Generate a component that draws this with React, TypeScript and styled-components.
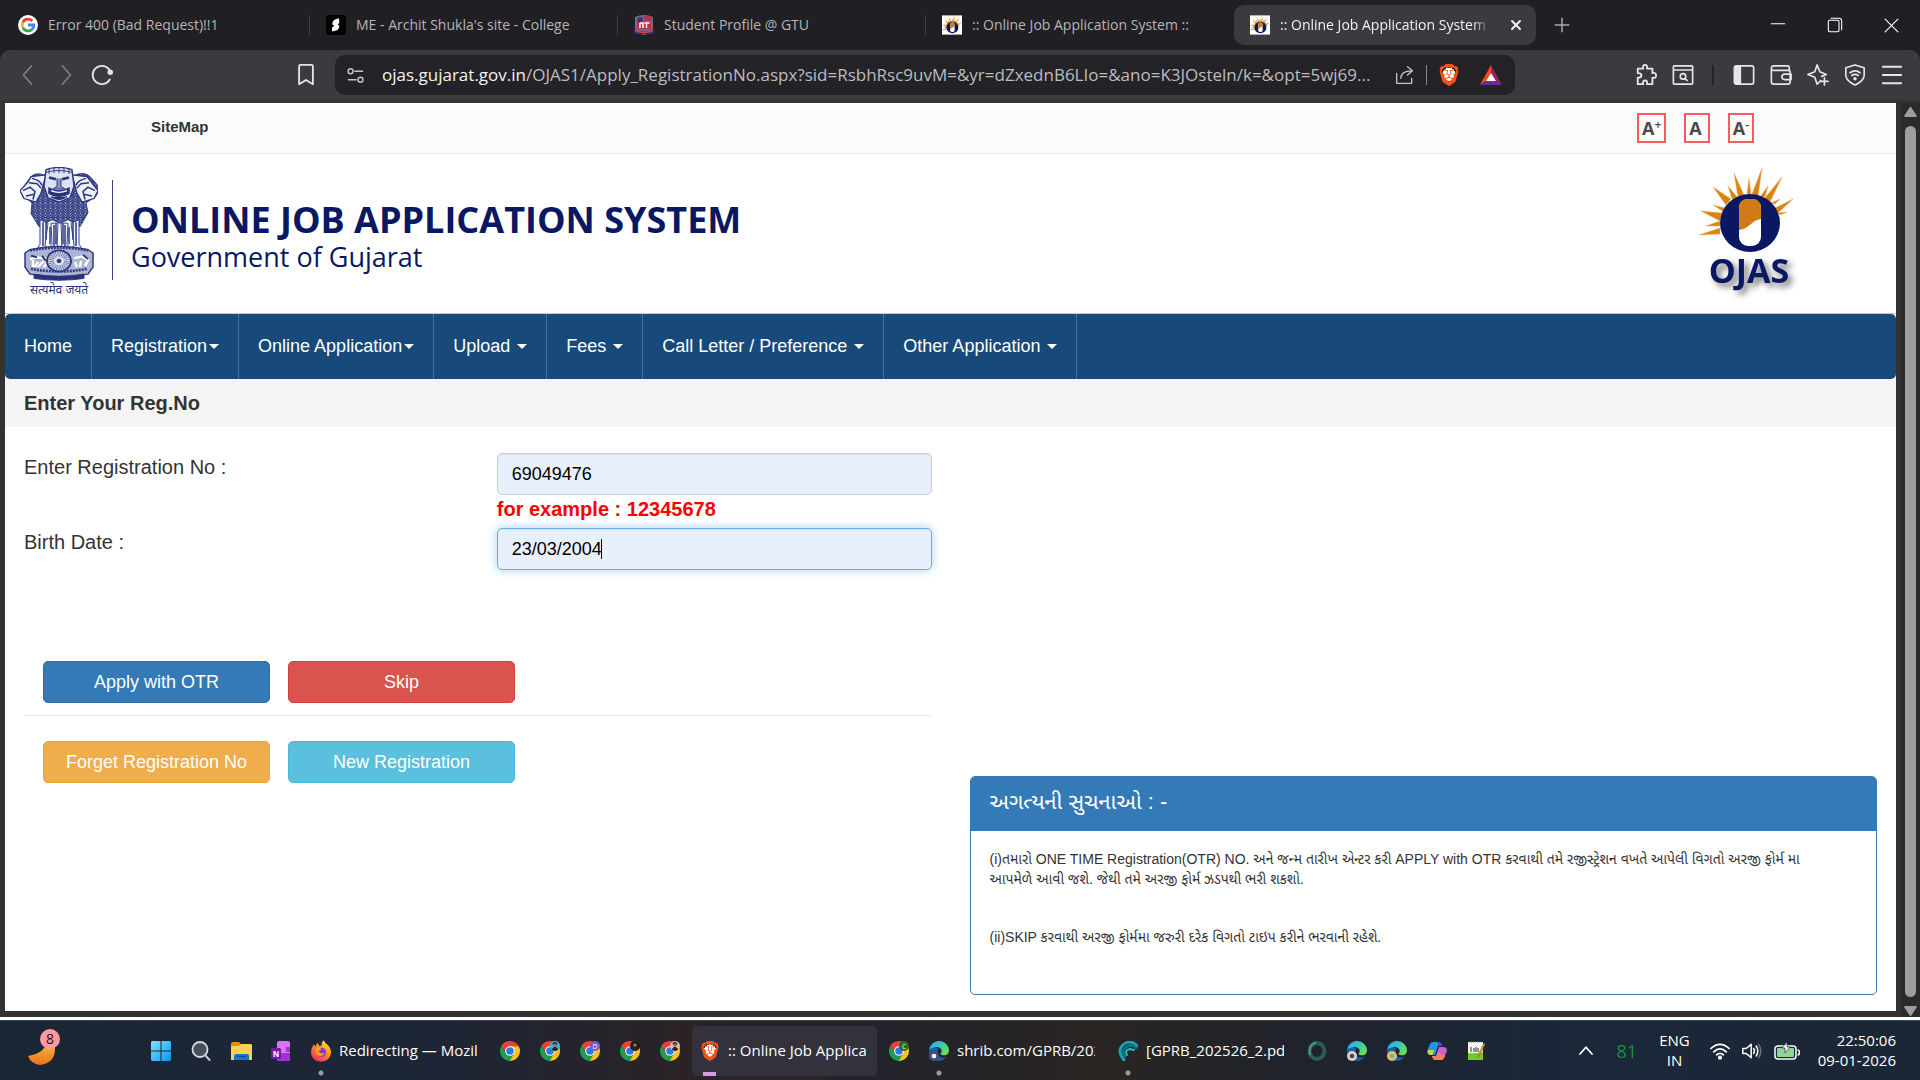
import React, { useEffect, useRef } from "react";
import styled, { createGlobalStyle, css } from "styled-components";
import { SiBrave } from "react-icons/si";

const ui = `"Open Sans", "Noto Sans", sans-serif`;
const site = `"Liberation Sans", "Noto Sans Gujarati", "Noto Sans", sans-serif`;

const GlobalStyle = createGlobalStyle`
  * { box-sizing: border-box; }
  body { margin: 0; background: #333333; overflow: hidden; }
  button { border: 0; background: none; padding: 0; color: inherit; font: inherit; cursor: pointer; }
  svg { display: block; flex: none; }
`;

const Screen = styled.div`
  display: flex;
  flex-direction: column;
  height: 100vh;
  font-family: ${ui};
`;

/* ---------- browser chrome ---------- */

const TabStrip = styled.div`
  display: flex;
  align-items: center;
  height: 50px;
  padding-left: 2px;
  background: #201f23;
  color: #b6b5b9;
  font-size: 14px;
`;

const Tab = styled.div<{ $active?: boolean; $divided?: boolean }>`
  display: flex;
  align-items: center;
  gap: 10px;
  flex: 0 1 308px;
  height: 40px;
  padding: 0 12px 0 16px;
  border-radius: 10px;
  min-width: 0;
  ${(p) =>
    p.$divided &&
    css`
      background: linear-gradient(#3f3e42, #3f3e42) right center / 1px 20px no-repeat;
      border-radius: 0;
    `}
  ${(p) =>
    p.$active &&
    css`
      flex-basis: 302px;
      background: #3b3a3f;
      color: #f2f2f4;
    `}
`;

const TabTitle = styled.span<{ $fade?: boolean }>`
  flex: 1;
  padding-bottom: 2px;
  overflow: hidden;
  white-space: nowrap;
  ${(p) => p.$fade && css`mask-image: linear-gradient(to right, #000 88%, transparent 97%);`}
`;

const StripButton = styled.button`
  display: grid;
  place-items: center;
  width: 52px;
  height: 40px;
  color: #a9a8ac;
`;

const WindowControls = styled.div`
  display: flex;
  margin-left: auto;
  color: #ffffff;
`;

const WindowButton = styled.button`
  display: grid;
  place-items: center;
  width: 57px;
  height: 48px;
`;

const Toolbar = styled.div`
  display: flex;
  align-items: center;
  height: 50px;
  padding: 0 10px 0 9px;
  background: #3b3a3f;
  border-radius: 10px 10px 0 0;
  color: #e6e6e8;
`;

const ToolbarBack = styled.div`
  background: #201f23;
`;

const ToolButton = styled.button<{ $dim?: boolean }>`
  display: grid;
  place-items: center;
  width: 37px;
  height: 40px;
  color: ${(p) => (p.$dim ? "#848388" : "inherit")};
`;

const BookmarkButton = styled(ToolButton)`
  margin-left: 167px;
`;

const AddressBar = styled.div`
  display: flex;
  align-items: center;
  flex: 0 1 1180px;
  min-width: 0;
  height: 40px;
  margin-left: 11px;
  padding: 0 6px 0 12px;
  border-radius: 10px;
  background: #232226;
  color: #c4c3c8;
`;

const Url = styled.a`
  flex: 1;
  min-width: 0;
  margin-left: 18px;
  padding-bottom: 2px;
  overflow: hidden;
  white-space: nowrap;
  color: #bdbcc1;
  font-size: 17px;
  text-decoration: none;

  b { font-weight: 400; color: #f4f4f6; }
`;

const Divider = styled.span<{ $dark?: boolean }>`
  width: ${(p) => (p.$dark ? 2 : 1)}px;
  height: 20px;
  margin: 0 ${(p) => (p.$dark ? 11 : 3)}px;
  background: ${(p) => (p.$dark ? "#232226" : "#87868b")};
`;

const AddressActions = styled.div`
  display: flex;
  align-items: center;

  button:last-child { margin-left: 5px; }
`;

const Extensions = styled.div`
  display: flex;
  align-items: center;
  margin-left: auto;
`;

/* ---------- page frame ---------- */

const Viewport = styled.div`
  display: flex;
  flex: 1;
  min-height: 0;
  padding: 3px 0 0 5px;
  background: #333333;
  border-bottom: 3px solid #ffffff;
`;

const Page = styled.div`
  display: flex;
  flex-direction: column;
  flex: 1;
  margin: 0 5px 6px 0;
  background: #ffffff;
  color: #333333;
  font-family: ${site};
`;

const Scrollbar = styled.div`
  display: flex;
  flex-direction: column;
  align-items: center;
  gap: 9px;
  width: 19px;
  padding: 4px 0 1px;
  background: #2b2b2b;
`;

const ScrollThumb = styled.div`
  flex: 1;
  width: 11px;
  border-radius: 6px;
  background: #9e9e9e;
`;

const TopBar = styled.div`
  display: flex;
  align-items: center;
  justify-content: space-between;
  height: 51px;
  padding: 0 142px 0 146px;
  background: #fbfbfb;
  border-bottom: 1px solid #e7e7e7;
`;

const SiteMap = styled.a`
  padding-bottom: 4px;
  color: #333333;
  font-size: 15px;
  font-weight: 700;
  text-decoration: none;
`;

const TextSizes = styled.div`
  display: flex;
  gap: 18px;
  padding-bottom: 1px;
`;

const SizeButton = styled.button`
  height: 30px;
  padding: 0 3px;
  border: 2px solid #f75b5b;
  color: #4a4a4a;
  font: 700 18px/26px ${ui};

  &:nth-child(2) { padding-right: 6px; }

  sup { font-size: 12px; font-weight: 600; line-height: 0; vertical-align: 6px; }
`;

const Banner = styled.header`
  display: flex;
  align-items: center;
  height: 160px;
  padding: 0 94px 0 15px;
  border-bottom: 1px solid #c5cbd0;
`;

const BannerRule = styled.div`
  width: 1px;
  height: 100px;
  margin: 0 18px 8px 14px;
  background: #3c477d;
`;

const BannerText = styled.div`
  flex: 1;
  padding-top: 4px;
  color: #0a1763;
  font-family: ${ui};
  white-space: nowrap;
`;

const BannerTitle = styled.h1`
  margin: 0;
  font-size: 36px;
  font-weight: 700;
  line-height: 42px;
`;

const BannerSub = styled.p`
  margin: 0;
  font-size: 27px;
  line-height: 32px;
`;

const Nav = styled.nav`
  display: flex;
  height: 65px;
  background: #174a7a;
  border-radius: 5px;
`;

const NavItem = styled.button<{ $tight?: boolean }>`
  display: flex;
  align-items: center;
  gap: ${(p) => (p.$tight ? 2 : 7)}px;
  padding: 0 19px;
  border-right: 1px solid #45719b;
  color: #ffffff;
  font-size: 18px;
`;

const Caret = styled.i`
  border: 5px solid transparent;
  border-top-color: #ffffff;
  border-bottom-width: 0;
`;

const TitleBand = styled.h2`
  margin: 0;
  padding: 0 19px;
  background: #f4f4f4;
  font-size: 20px;
  line-height: 48px;
`;

const Main = styled.main`
  display: grid;
  grid-template-columns: 1fr 1fr;
  flex: 1;
`;

const Column = styled.section`
  padding: 26px 19px 16px;
`;

const NoticeColumn = styled(Column)`
  align-self: end;
`;

const Field = styled.div`
  display: grid;
  grid-template-columns: 1fr 1fr;
  column-gap: 38px;
  margin-bottom: 5px;
`;

const FieldLabel = styled.label`
  font-size: 20px;
  line-height: 28px;
`;

const TextBox = styled.input<{ $current?: boolean }>`
  display: block;
  width: 100%;
  height: 42px;
  padding: 0 14px;
  border: 1px solid ${(p) => (p.$current ? "#66afe9" : "#cccccc")};
  border-radius: 5px;
  outline: 0;
  background: #e8f0fe;
  box-shadow: inset 0 1px 1px rgba(0, 0, 0, 0.08)
    ${(p) => (p.$current ? ", 0 0 10px rgba(102, 175, 233, 0.6)" : "")};
  color: #000000;
  font: 18px ${site};
  ${(p) =>
    p.$current &&
    css`
      caret-color: transparent;
      background: linear-gradient(#000000, #000000) 103px center / 1px 20px no-repeat #e8f0fe;
    `}
`;

const Hint = styled.p`
  margin: 0;
  color: #ff0000;
  font-size: 20px;
  font-weight: 700;
  line-height: 28px;
`;

const Actions = styled.div`
  display: flex;
  gap: 18px;
  padding: 0 19px;
`;

const FirstActions = styled(Actions)`
  margin-top: 91px;
`;

const Rule = styled.hr`
  margin: 12px 0 25px;
  border: 0;
  border-top: 1px solid #eeeeee;
`;

const tones = {
  primary: ["#337ab7", "#2e6da4"],
  danger: ["#d9534f", "#d43f3a"],
  warning: ["#f0ad4e", "#eea236"],
  info: ["#5bc0de", "#46b8da"],
};

const ActionButton = styled.button<{ $tone: keyof typeof tones }>`
  width: 227px;
  height: 42px;
  border: 1px solid ${(p) => tones[p.$tone][1]};
  border-radius: 5px;
  background: ${(p) => tones[p.$tone][0]};
  color: #ffffff;
  font-size: 18px;
`;

const Panel = styled.article`
  border: 1px solid #337ab7;
  border-radius: 5px;
  overflow: hidden;
`;

const PanelHead = styled.h3`
  margin: 0;
  padding: 0 19px 4px;
  background: #337ab7;
  color: #ffffff;
  font-size: 22px;
  font-weight: 400;
  line-height: 50px;
`;

const PanelBody = styled.div`
  padding: 18px 19px 47px;
  font-size: 14px;
  line-height: 20px;

  p { margin: 0 0 38px; }
  p:last-child { margin: 0; }
`;

/* ---------- task bar ---------- */

const TaskBar = styled.footer`
  display: flex;
  align-items: center;
  height: 60px;
  padding: 0 24px 0 21px;
  border-top: 1px solid #3b444e;
  background: linear-gradient(90deg, #1b2635 0%, #1d2636 22%, #2b2326 36%, #23232b 46%, #2a2523 57%, #1e232d 70%, #1b283a 82%, #1c2735 100%);
  color: #ffffff;
  font-size: 15px;
`;

const Weather = styled.button`
  margin-right: 78px;
`;

const Task = styled.button<{ $wide?: boolean; $mark?: "dot" | "current" }>`
  display: flex;
  align-items: center;
  gap: 8px;
  flex: 0 1 ${(p) => (p.$wide ? 185 : 36)}px;
  min-width: 36px;
  height: 50px;
  margin: 0 2px;
  padding: 0 ${(p) => (p.$wide ? 11 : 8)}px 0 8px;
  border-radius: 5px;
  overflow: hidden;
  white-space: nowrap;
  background: ${(p) => {
    if (p.$mark === "dot") return "radial-gradient(circle at 18px 47px, #9a9ba0 2px, transparent 3px)";
    if (p.$mark === "current") return "linear-gradient(#d69be0, #d69be0) 11px 46px / 13px 4px no-repeat, #33313c";
    return "none";
  }};
`;

const TaskLabel = styled.span`
  flex: 1;
  padding-bottom: 2px;
  overflow: hidden;
  text-align: left;
`;

const Tray = styled.div`
  display: flex;
  align-items: center;
  gap: 12px;
  margin-left: auto;
`;

const Temp = styled.span`
  margin: 0 10px;
  color: #178f45;
  font-size: 18px;
`;

const Stacked = styled.span<{ $end?: boolean }>`
  margin: ${(p) => (p.$end ? "0 0 0 6px" : "0 8px 0 0")};
  text-align: ${(p) => (p.$end ? "right" : "center")};
  font-size: 15px;
  line-height: 20px;
  padding-bottom: 2px;
`;

/* ---------- drawings ---------- */

const BraveMark = styled(SiBrave)`
  color: #fb5018;
  background: radial-gradient(circle at 50% 48%, #ffffff 42%, transparent 43%);
`;

const Line: React.FC<{ size?: number; w?: number; children: React.ReactNode }> = ({ size = 22, w = 1.6, children }) => (
  <svg width={size} height={size} viewBox="0 0 24 24" fill="none" stroke="currentColor" strokeWidth={w} strokeLinecap="round" strokeLinejoin="round">
    {children}
  </svg>
);

const Google = () => (
  <svg width="20" height="20" viewBox="0 0 24 24">
    <circle cx="12" cy="12" r="12" fill="#fff" />
    <g fill="none" strokeWidth="3.4">
      <path d="M17.1 7.2A7 7 0 0 0 5.7 9" stroke="#ea4335" />
      <path d="M5.7 9a7 7 0 0 0 0 6" stroke="#fbbc05" />
      <path d="M5.7 15a7 7 0 0 0 10.8 2.5" stroke="#34a853" />
      <path d="M12 12h7a7 7 0 0 1-2.5 5.5" stroke="#4285f4" />
    </g>
  </svg>
);

const SiteS = () => (
  <svg width="20" height="20" viewBox="0 0 20 20">
    <rect width="20" height="20" rx="3" fill="#000" />
    <path d="M13 3.2 9 4.4Q6 6 6.4 9.600l2 1.200-2.400 1.600v4l4.200-.8Q13.600 14 13.200 10.400l-1.600-1 1.800-1.600Z" fill="#fff" />
  </svg>
);

const Crest = () => (
  <svg width="20" height="20" viewBox="0 0 20 20">
    <path d="M1 2Q10-2 19 2v12q-3 5-9 6-6-1-9-6Z" fill="#6e6f88" />
    <circle cx="6" cy="5" r="3" fill="#3c3a62" />
    <path d="M3 7h14v7H3Z" fill="#c92a43" />
    <path d="M10 1h8v5h-8Z" fill="#a83a50" />
    <path d="M6 8v5M6 8h3v5M12.500 8v5M10.500 8h5" stroke="#fff" strokeWidth="1.500" fill="none" />
    <path d="M0 14q10 5 20 0v5H0Z" fill="#2d2a80" />
    <path d="M1 15.500q9 4 18 0" stroke="#e0442e" strokeWidth="1.500" fill="none" />
  </svg>
);

const rays =
  "M1 80 22 73V79ZM8 71 22 66V71ZM3 56 24 58 22 66ZM15 50 27 53 26 57ZM15 32 33 44 28 50ZM30 31 40 43 34 44ZM36 18 46 40 40 42ZM51 23 53 39H49ZM64 13 60 42 54 39ZM70 31 67 42 62 42ZM84 22 72 47 66 44ZM82 44 77 49 73 48ZM95 44 80 58 77 53ZM89 57 82 60 80 58Z";

const OjasSun: React.FC<{ small?: boolean }> = ({ small }) => (
  <>
    <path d={rays} fill="#d98316" stroke="#f0b050" strokeWidth={small ? 2 : 0.5} />
    <ellipse cx="52" cy="68" rx="30" ry="29" fill="#0a1763" />
    <rect x="41" y="44" width="22" height="47" rx="9" fill="#fff" />
    <path d="M41 75V53q0-9 9-9h4q9 0 9 9v11c-10 1-11 10-22 11Z" fill="#d07a18" />
  </>
);

const OjasFavicon = () => (
  <svg width="20" height="20" viewBox="0 8 100 96">
    <rect y="8" width="100" height="96" fill="#fff" />
    <OjasSun small />
  </svg>
);

const OjasShadowed = styled.text`
  font: 700 34px ${ui};
  fill: #0a1763;
  filter: drop-shadow(4px 4px 3px #777777);
`;

const OjasLogo = () => (
  <svg width="104" height="136" viewBox="0 11 104 136">
    <OjasSun />
    <OjasShadowed x="51" y="128" textAnchor="middle">OJAS</OjasShadowed>
  </svg>
);

const Emblem = () => (
  <svg viewBox="2 2 78 131" preserveAspectRatio="none" fill="none" stroke="#2c3780" strokeWidth="1">
    <defs>
      <pattern id="mane" width="5" height="6" patternUnits="userSpaceOnUse">
        <rect width="5" height="6" fill="#c9cde2" />
        <path d="M0 0 2.500 3.500 5 0M0 3 2.500 6.500 5 3" stroke="#28337c" strokeWidth="1.300" fill="none" />
      </pattern>
    </defs>
    <path d="M28 12Q16 6 11 16L3 29l6 9 5 5-1 12 8 15 13-8 8 4 8-4 12 8 8-16-2-11 10-8 4-9-9-12Q67 6 55 12Z" fill="url(#mane)" />
    <path d="M28 11 13 13 10 19 2 29 6 38 18 42 23 32ZM54 11 69 13 73 19 80 29 76 38 64 42 59 32Z" fill="#eef0f8" strokeWidth="1.400" />
    <path d="M5 29l7-4 5 5-2 9M11 20l8 1 4 5M8 35l8-2M77 29l-7-4-5 5 2 9M71 20l-8 1-4 5M74 35l-8-2M14 15q8 2 10 8M68 15q-8 2-10 8" strokeWidth="1.600" />
    <path d="M28 5Q41 0 54 5l2 19-4 13-11 5-11-5-4-13Z" fill="#dfe2f0" strokeWidth="1.400" />
    <path d="M28 8q13-4 26 0M31 3v7M36 2v7M41 1v8M46 2v7M51 3v7" />
    <path d="m31 14 7 2M51 14l-7 2" strokeWidth="3" />
    <path d="M39 15v9l-4 3h12l-4-3v-9" fill="#8b93bd" />
    <path d="M31 26q10 6 20 0v6q-10 7-20 0ZM33 36q8 6 16 0" fill="#28337c" strokeWidth="1.500" />
    <path d="M33 29q8 4 16 0" stroke="#fff" strokeWidth="1.500" />
    <path d="M22 62v28l-4 7h12l-3-6 3-25ZM33 66l1 24-5 7h10l1-31ZM43 66l1 31h10l-5-7 1-24ZM53 66l3 25-3 6h12l-4-7V62Z" fill="#f4f5fb" />
    <path d="M25 65v27M36 68v24M47 68v24M58 65v27M28 65v20M55 65v20M32 70v20M51 70v20M38 66v24M45 66v24" strokeWidth="1.500" />
    <path d="M12 96Q41 89 70 96l5 4v16l-5 8q-29 6-58 0l-5-8v-16Z" fill="#aeb5d3" strokeWidth="1.500" />
    <path d="M12 97q29-6 58 0M13 118q28 6 56 0" strokeWidth="3" strokeDasharray="2 1" />
    <path d="m12 107 7-2 8 1 2 5-3 5M15 108v8M20 110l-3 6M26 109l-6 7M56 106l8-2 6 4-3 7M57 110l2 6M63 109l-1 7" stroke="#fff" strokeWidth="2.500" />
    <path d="m13 103 6 2M65 102l5 5M24 103l4 6" stroke="#28337c" strokeWidth="2" />
    <circle cx="41" cy="109" r="12" fill="#dfe2f0" strokeWidth="2" />
    <circle cx="41" cy="109" r="8" strokeWidth="6" stroke="#6d77ab" strokeDasharray="1 1" />
    <circle cx="41" cy="109" r="2" fill="#28337c" />
    <path d="M16 124q25 5 50 0v5q-25 4-50 0Z" fill="#28337c" />
  </svg>
);

const EmblemBox = styled.figure`
  width: 78px;
  margin: 0;
  color: #28337c;
  text-align: center;
  font: 12px/18px "Noto Sans Devanagari", "Noto Sans", sans-serif;
  white-space: nowrap;

  svg { width: 78px; height: 115px; }
`;

const Chrome: React.FC<{ badge?: string; letter?: string }> = ({ badge, letter }) => (
  <svg width="20" height="20" viewBox="0 0 24 24">
    <path d="M12 6.400H22.600A12 12 0 0 0 1.700 5.800L7.100 14.800Z" fill="#ea4335" />
    <path d="M1.700 5.800A12 12 0 0 0 11.600 24L16.900 14.800 12 17.600 7.100 14.800Z" fill="#1e9d4c" />
    <path d="M22.600 6.400A12 12 0 0 1 11.600 24L16.900 14.800 12 6.400Z" fill="#fcc31e" />
    <circle cx="12" cy="12" r="5.800" fill="#fff" />
    <circle cx="12" cy="12" r="4.500" fill="#2c7be5" />
    {badge && <circle cx="18" cy="6" r="6" fill={badge} />}
    {letter && <text x="18" y="9" fontSize="8" fill="#fff" textAnchor="middle" fontFamily="Open Sans">{letter}</text>}
    {badge && !letter && (
      <>
        <circle cx="18" cy="4.500" r="2.400" fill="#a5715a" />
        <path d="M14 10q4-6 8 0-4 4-8 0Z" fill="#29242b" />
        <path d="M15.500 4q2-4 5 0" stroke="#19151a" strokeWidth="1.500" fill="none" />
      </>
    )}
  </svg>
);

const Edge: React.FC<{ badge: string; inner: string }> = ({ badge, inner }) => (
  <svg width="20" height="20" viewBox="0 0 24 24">
    <defs>
      <linearGradient id="edgeTop" x1="0" y1="0" x2="1" y2="0.600">
        <stop offset="0" stopColor="#2aa9e0" />
        <stop offset="0.500" stopColor="#2fc4c8" />
        <stop offset="1" stopColor="#6de04f" />
      </linearGradient>
    </defs>
    <path d="M.2 10A12 12 0 0 0 12 24q5 0 9-5-6 2-9-1-3-4-1-9Q4 5 .2 10Z" fill="#1462ad" />
    <path d="M.2 10A12 12 0 0 1 24 11c0 5-4 6.500-7 6-3 0-4-1.400-2.500-3C17 10 12 6 7 7.500Q2 8.500.2 10Z" fill="url(#edgeTop)" />
    <circle cx="6" cy="18" r="6" fill={badge} />
    <circle cx="6" cy="18" r="2.800" fill={inner} />
  </svg>
);

const Firefox = () => (
  <svg width="20" height="22" viewBox="0 0 24 26">
    <defs>
      <linearGradient id="fox" x1="0.800" y1="0" x2="0.200" y2="1">
        <stop offset="0" stopColor="#fff14a" />
        <stop offset="0.450" stopColor="#ff8b1f" />
        <stop offset="1" stopColor="#f5236b" />
      </linearGradient>
    </defs>
    <path d="M15 0q2 3 4 5 5 4 5 10A12 11 0 0 1 0 15Q0 9 4 5l1 3 3-5 2 4 3-1Q12 3 15 0Z" fill="url(#fox)" />
    <circle cx="12.500" cy="14.500" r="5.500" fill="#7a3fd0" />
    <path d="M6 10q4-2 7 1l-4 2q2 4 7 2-2 6-8 3-4-3-2-8Z" fill="#ff9a26" />
  </svg>
);

const Windows = () => (
  <svg width="20" height="20" viewBox="0 0 20 20">
    <defs>
      <linearGradient id="win" x1="0" y1="0" x2="1" y2="1">
        <stop offset="0" stopColor="#7be7ff" />
        <stop offset="1" stopColor="#0c94ee" />
      </linearGradient>
    </defs>
    <path d="M0 1 1 0h8.500v9.500H0ZM10.500 0H19l1 1v8.500h-9.500ZM0 10.500h9.500V20H1l-1-1ZM10.500 10.500H20V19l-1 1h-8.500Z" fill="url(#win)" />
  </svg>
);

const Folder = () => (
  <svg width="21" height="20" viewBox="0 0 21 20">
    <path d="M0 2 1.500 1H8l2 2v4H0Z" fill="#d9930b" />
    <path d="M0 5h8l2-2h10l1 1v15H0Z" fill="#ffd052" />
    <path d="M3 19v-4q0-2 2-2h11q2 0 2 2v4Z" fill="#1277c9" />
    <path d="M6 15.500h9" stroke="#084d8c" />
  </svg>
);

const OneNote = () => (
  <svg width="20" height="20" viewBox="0 0 20 20">
    <rect x="6" width="13" height="20" rx="2" fill="#d873f5" />
    <path d="M15 6h4v5h-4Z" fill="#9d35c5" /><path d="M7 12h12v6q0 2-2 2H7Z" fill="#a331cf" />
    <rect y="7" width="10" height="11" rx="1.500" fill="#7719a8" />
    <text x="5" y="15.500" fill="#fff" fontSize="8" fontWeight="700" textAnchor="middle" fontFamily="Open Sans">N</text>
  </svg>
);

const Search = () => (
  <svg width="20" height="20" viewBox="0 0 20 20" fill="none">
    <circle cx="9" cy="8.500" r="7.500" fill="#46515e" stroke="#d8dade" strokeWidth="1.800" />
    <path d="m14 14 4.500 5" stroke="#c4c7cc" strokeWidth="2" strokeLinecap="round" />
  </svg>
);

const TealFan = () => (
  <svg width="20" height="20" viewBox="0 0 20 20" fill="none" strokeLinecap="round">
    <path d="M6 19Q-3 8 8 2q6-3 11 3" stroke="#16a3b3" strokeWidth="3" />
    <path d="M7 16Q2 9 10 5q5-2 8 2" stroke="#0d7786" strokeWidth="2.500" />
    <path d="M9 14Q6 9 12 8l4 1" stroke="#1dc0cc" strokeWidth="2" />
  </svg>
);

const Ring = () => (
  <svg width="20" height="20" viewBox="0 0 20 20" fill="none">
    <ellipse cx="10" cy="10" rx="7.500" ry="8" stroke="#2c5c57" strokeWidth="4" />
    <path d="M9 1.500Q1 4 3 14" stroke="#4d9482" strokeWidth="2" />
  </svg>
);

const Copilot = () => (
  <svg width="20" height="20" viewBox="0 0 20 20">
    <path d="M6 1h6q2 0 3 4h-4L8 14H4q-5 0-3.500-5L3 3q1-2 3-2Z" fill="#2593e8" />
    <path d="M1 9h6l-1.500 5H4Q0 14 1 9Z" fill="#c9d53d" />
    <path d="M14 19H8q-2 0-3-4h4l3-9h4q5 0 3.500 5L17 17q-1 2-3 2Z" fill="#c95fd0" />
    <path d="M14 19H8q-2 0-3-4h4l2-4 7 4-1 2q-1 2-3 2Z" fill="#fb7a62" />
    <path d="M11 1h1q2 0 3 4h-4Z" fill="#5445ca" />
  </svg>
);

const NotePad = () => (
  <svg width="20" height="20" viewBox="0 0 20 20">
    <path d="M1 1h15v18H1Z" fill="#f5f7ec" /><path d="M1 12q8 1 15-1v8H1Z" fill="#6ecb28" />
    <path d="M2 1h14" stroke="#777" strokeDasharray="1 1" /><path d="M4 6v5M7 7v4M9 6v5M11 7v4" stroke="#333" />
    <path d="m18 3-5 11-2 2 1-4 5-10Z" fill="#f4a42c" stroke="#8c4a18" strokeWidth=".5" />
  </svg>
);

const Moon = () => (
  <svg width="42" height="46" viewBox="0 0 42 46">
    <defs>
      <linearGradient id="moon" x1="0" y1="0" x2="0" y2="1">
        <stop offset="0" stopColor="#f8c24a" />
        <stop offset="1" stopColor="#ed7218" />
      </linearGradient>
    </defs>
    <path d="M26 12Q25 25 7 28q3 8 12 9 15-2 15-16 0-6-8-9Z" fill="url(#moon)" />
    <circle cx="29" cy="11" r="10" fill="#ff98a3" />
    <text x="29" y="16" fontSize="14" textAnchor="middle" fill="#201015" fontFamily="Open Sans">8</text>
  </svg>
);

const Bat = () => (
  <svg width="22" height="20" viewBox="0 0 22 20">
    <path d="M11 0 0 20l6-4 5-8Z" fill="#ff4724" /><path d="M11 0 22 20l-6-4-5-8Z" fill="#9e1f63" /><path d="M0 20h22l-6-4H6Z" fill="#662d91" />
    <path d="m11 8 5 8H6Z" fill="#fff" />
  </svg>
);

const ScrollArrow: React.FC<{ down?: boolean }> = ({ down }) => (
  <svg width="13" height="10" viewBox="0 0 13 10">
    <path d={down ? "M1 0h11l1 1-6 9H6L0 1Z" : "M6 0h1l6 9-1 1H1L0 9Z"} fill="#9e9e9e" />
  </svg>
);

/* ---------- data ---------- */

const tabs = [
  { title: "Error 400 (Bad Request)!!1", icon: <Google /> },
  { title: "ME - Archit Shukla's site - College", icon: <SiteS /> },
  { title: "Student Profile @ GTU", icon: <Crest /> },
  { title: ":: Online Job Application System ::", icon: <OjasFavicon /> },
];

const menus = [
  { label: "Registration", tight: true },
  { label: "Online Application", tight: true },
  { label: "Upload" },
  { label: "Fees" },
  { label: "Call Letter / Preference" },
  { label: "Other Application" },
];

export default function App() {
  const birth = useRef<HTMLInputElement>(null);

  useEffect(() => {
    const box = birth.current;
    if (box) {
      box.focus();
      box.setSelectionRange(box.value.length, box.value.length);
    }
  }, []);

  return (
    <Screen>
      <GlobalStyle />
      <TabStrip>
        {tabs.map((tab, i) => (
          <Tab key={tab.title} $divided={i < 3}>
            {tab.icon}
            <TabTitle>{tab.title}</TabTitle>
          </Tab>
        ))}
        <Tab $active>
          <OjasFavicon />
          <TabTitle $fade>:: Online Job Application System ::</TabTitle>
          <button aria-label="Close tab"><Line size={16} w={3}><path d="m6 6 12 12M18 6 6 18" /></Line></button>
        </Tab>
        <StripButton aria-label="New tab"><Line size={18} w={2}><path d="M12 3v18M3 12h18" /></Line></StripButton>
        <WindowControls>
          <WindowButton aria-label="Minimize"><Line size={16}><path d="M2 10h20" /></Line></WindowButton>
          <WindowButton aria-label="Restore"><Line size={16}><rect x="2" y="5" width="16" height="17" rx="2" /><path d="M6 2h12q4 0 4 4v13" /></Line></WindowButton>
          <WindowButton aria-label="Close"><Line size={17}><path d="m3 3 18 18M21 3 3 21" /></Line></WindowButton>
        </WindowControls>
      </TabStrip>

      <ToolbarBack>
        <Toolbar>
          <ToolButton $dim aria-label="Back"><Line><path d="M16 2 7 12l9 10" /></Line></ToolButton>
          <ToolButton $dim aria-label="Forward"><Line><path d="m9 2 9 10-9 10" /></Line></ToolButton>
          <ToolButton aria-label="Reload"><Line w={2}><path d="M20.500 17A10 10 0 1 1 19.500 5.500L22 9" /><circle cx="21" cy="9" r="2" fill="currentColor" /></Line></ToolButton>
          <BookmarkButton aria-label="Bookmark"><Line w={2}><path d="M4.500 2.500Q4.500 1 6 1h12q1.500 0 1.500 1.500V22L12 17.500 4.500 22Z" /></Line></BookmarkButton>
          <AddressBar>
            <Line size={17} w={2}><circle cx="5" cy="6" r="3.500" /><path d="M11 6h11M2 18h11" /><circle cx="19" cy="18" r="3.500" /></Line>
            <Url href="#"><b>ojas.gujarat.gov.in</b>/OJAS1/Apply_RegistrationNo.aspx?sid=RsbhRsc9uvM=&amp;yr=dZxednB6LIo=&amp;ano=K3JOsteln/k=&amp;opt=5wj69...</Url>
            <AddressActions>
              <ToolButton aria-label="Share"><Line size={20}><path d="M2 10v12h18v-6M7 16c0-6 4-9 13-9M15 2l6 5-6 5" /></Line></ToolButton>
              <Divider />
              <ToolButton aria-label="Shields"><BraveMark size={22} /></ToolButton>
              <ToolButton aria-label="Rewards"><Bat /></ToolButton>
            </AddressActions>
          </AddressBar>
          <Extensions>
            <ToolButton aria-label="Extensions"><Line w={2}><path d="M3 5h6q-1-4 2-4t2 4h6v5q4-1 4 2.500T19 15v7h-6q1-4-2-4t-2 4H3v-7q4 0 4-2.500T3 10Z" /></Line></ToolButton>
            <ToolButton aria-label="Search page"><Line w={1.8}><rect x="1.500" y="2" width="21" height="20" rx="1" /><path d="M2 6.500h20" /><circle cx="12" cy="13.500" r="3" /><path d="m14 16 2.500 2" /></Line></ToolButton>
            <Divider $dark />
            <ToolButton aria-label="Sidebar"><Line w={1.8}><rect x="1.500" y="2" width="21" height="20" rx="2" /><path d="M2 3h6v18H2Z" fill="currentColor" /></Line></ToolButton>
            <ToolButton aria-label="Wallet"><Line w={1.8}><path d="M21 7V4q0-2-2-2H4Q1.500 2 1.500 5v14Q1.500 22 4 22h15q3 0 3-3V9q0-2-2-2H4Q2 7 1.500 5M23 11h-7q-3 0-3 3t3 3h7Z" /></Line></ToolButton>
            <ToolButton aria-label="Assistant"><Line w={1.8}><path d="M15 18 11 22 8.500 14.500 1 11.500 8.500 8.500 11 1l3 7.500 7 3-5 2M19 15v8M15 19h8" /></Line></ToolButton>
            <ToolButton aria-label="VPN"><Line w={1.8}><path d="M12 1 22 4v9q-1 6-10 10Q3 19 2 13V4Z" /><path d="M6.500 9.500q5.500-4 11 0M8.500 12.500q3.500-2.500 7 0" /><circle cx="12" cy="16" r="1" fill="currentColor" /></Line></ToolButton>
            <ToolButton aria-label="Menu"><Line w={2}><path d="M2 3h20M2 12h20M2 21h20" /></Line></ToolButton>
          </Extensions>
        </Toolbar>
      </ToolbarBack>

      <Viewport>
        <Page>
          <TopBar>
            <SiteMap href="#">SiteMap</SiteMap>
            <TextSizes>
              <SizeButton>A<sup>+</sup></SizeButton>
              <SizeButton>A</SizeButton>
              <SizeButton>A<sup>-</sup></SizeButton>
            </TextSizes>
          </TopBar>
          <Banner>
            <EmblemBox>
              <Emblem />
              सत्यमेव जयते
            </EmblemBox>
            <BannerRule />
            <BannerText>
              <BannerTitle>ONLINE JOB APPLICATION SYSTEM</BannerTitle>
              <BannerSub>Government of Gujarat</BannerSub>
            </BannerText>
            <OjasLogo />
          </Banner>
          <Nav>
            <NavItem>Home</NavItem>
            {menus.map((m) => (
              <NavItem key={m.label} $tight={m.tight}>
                {m.label}
                <Caret />
              </NavItem>
            ))}
          </Nav>
          <TitleBand>Enter Your Reg.No</TitleBand>
          <Main>
            <Column>
              <Field>
                <FieldLabel htmlFor="regno">Enter Registration No :</FieldLabel>
                <div>
                  <TextBox id="regno" defaultValue="69049476" />
                  <Hint>for example : 12345678</Hint>
                </div>
              </Field>
              <Field>
                <FieldLabel htmlFor="birth">Birth Date :</FieldLabel>
                <TextBox id="birth" ref={birth} $current defaultValue="23/03/2004" />
              </Field>
              <FirstActions>
                <ActionButton $tone="primary">Apply with OTR</ActionButton>
                <ActionButton $tone="danger">Skip</ActionButton>
              </FirstActions>
              <Rule />
              <Actions>
                <ActionButton $tone="warning">Forget Registration No</ActionButton>
                <ActionButton $tone="info">New Registration</ActionButton>
              </Actions>
            </Column>
            <NoticeColumn>
              <Panel>
                <PanelHead>અગત્યની સુચનાઓ : -</PanelHead>
                <PanelBody>
                  <p>
                    (i)તમારો ONE TIME Registration(OTR) NO. અને જન્મ તારીખ એન્ટર કરી APPLY with OTR કરવાથી તમે રજીસ્ટ્રેશન વખતે આપેલી વિગતો અરજી ફોર્મ મા
                    <br />
                    આપમેળે આવી જશે. જેથી તમે અરજી ફોર્મ ઝડપથી ભરી શકશો.
                  </p>
                  <p>(ii)SKIP કરવાથી અરજી ફોર્મમા જરુરી દરેક વિગતો ટાઇપ કરીને ભરવાની રહેશે.</p>
                </PanelBody>
              </Panel>
            </NoticeColumn>
          </Main>
        </Page>
        <Scrollbar>
          <ScrollArrow />
          <ScrollThumb />
          <ScrollArrow down />
        </Scrollbar>
      </Viewport>

      <TaskBar>
        <Weather aria-label="Widgets"><Moon /></Weather>
        <Task aria-label="Start"><Windows /></Task>
        <Task aria-label="Search"><Search /></Task>
        <Task aria-label="Files"><Folder /></Task>
        <Task aria-label="OneNote"><OneNote /></Task>
        <Task $wide $mark="dot"><Firefox /><TaskLabel>Redirecting — Mozilla</TaskLabel></Task>
        <Task aria-label="Chrome"><Chrome /></Task>
        <Task aria-label="Chrome profile 1"><Chrome badge="#35b9c4" /></Task>
        <Task aria-label="Chrome profile 2"><Chrome badge="#7e57c2" letter="D" /></Task>
        <Task aria-label="Chrome profile 3"><Chrome badge="#241a18" /></Task>
        <Task aria-label="Chrome profile 4"><Chrome badge="#e3b9b5" /></Task>
        <Task $wide $mark="current"><BraveMark size={20} /><TaskLabel>:: Online Job Application</TaskLabel></Task>
        <Task aria-label="Chrome profile 5"><Chrome badge="#2c6a21" letter="C" /></Task>
        <Task $wide $mark="dot"><Edge badge="#4e4a78" inner="#fff" /><TaskLabel>shrib.com/GPRB/202</TaskLabel></Task>
        <Task $wide $mark="dot"><TealFan /><TaskLabel>[GPRB_202526_2.pdf]</TaskLabel></Task>
        <Task aria-label="Opera"><Ring /></Task>
        <Task aria-label="Edge profile 1"><Edge badge="#d9d2cf" inner="#5d4037" /></Task>
        <Task aria-label="Edge profile 2"><Edge badge="#f2b76b" inner="#43c6c9" /></Task>
        <Task aria-label="Copilot"><Copilot /></Task>
        <Task aria-label="Notepad++"><NotePad /></Task>
        <Tray>
          <Line size={18} w={2.4}><path d="m4 16 8-9 8 9" /></Line>
          <Temp>81</Temp>
          <Stacked>ENG<br />IN</Stacked>
          <Line size={20} w={2}><path d="M1 9q11-10 22 0M4.500 13q7.500-7 15 0M8 16.500q4-3.500 8 0" /><circle cx="12" cy="20" r="1.500" fill="currentColor" /></Line>
          <Line size={20} w={1.800}><path d="M1 9v6h4l6 5V4L5 9ZM14 9q2 3 0 6M17 6q4 6 0 12" /><path d="M20 4q5 8 0 16" stroke="#68717c" /></Line>
          <svg width="26" height="18" viewBox="0 0 26 18">
            <rect x="1" y="4" width="21" height="13" rx="3" fill="none" stroke="#fff" strokeWidth="1.500" />
            <rect x="3" y="6" width="17" height="9" rx="1" fill="#8fd694" /><path d="M23.500 8q2 0 2 2.500t-2 2.500" fill="none" stroke="#fff" strokeWidth="1.500" />
            <path d="m13 0-5 6h3v5l5-6h-3Z" fill="#fff" stroke="#1c2735" strokeWidth=".7" />
          </svg>
          <Stacked $end>22:50:06<br />09-01-2026</Stacked>
        </Tray>
      </TaskBar>
    </Screen>
  );
}
